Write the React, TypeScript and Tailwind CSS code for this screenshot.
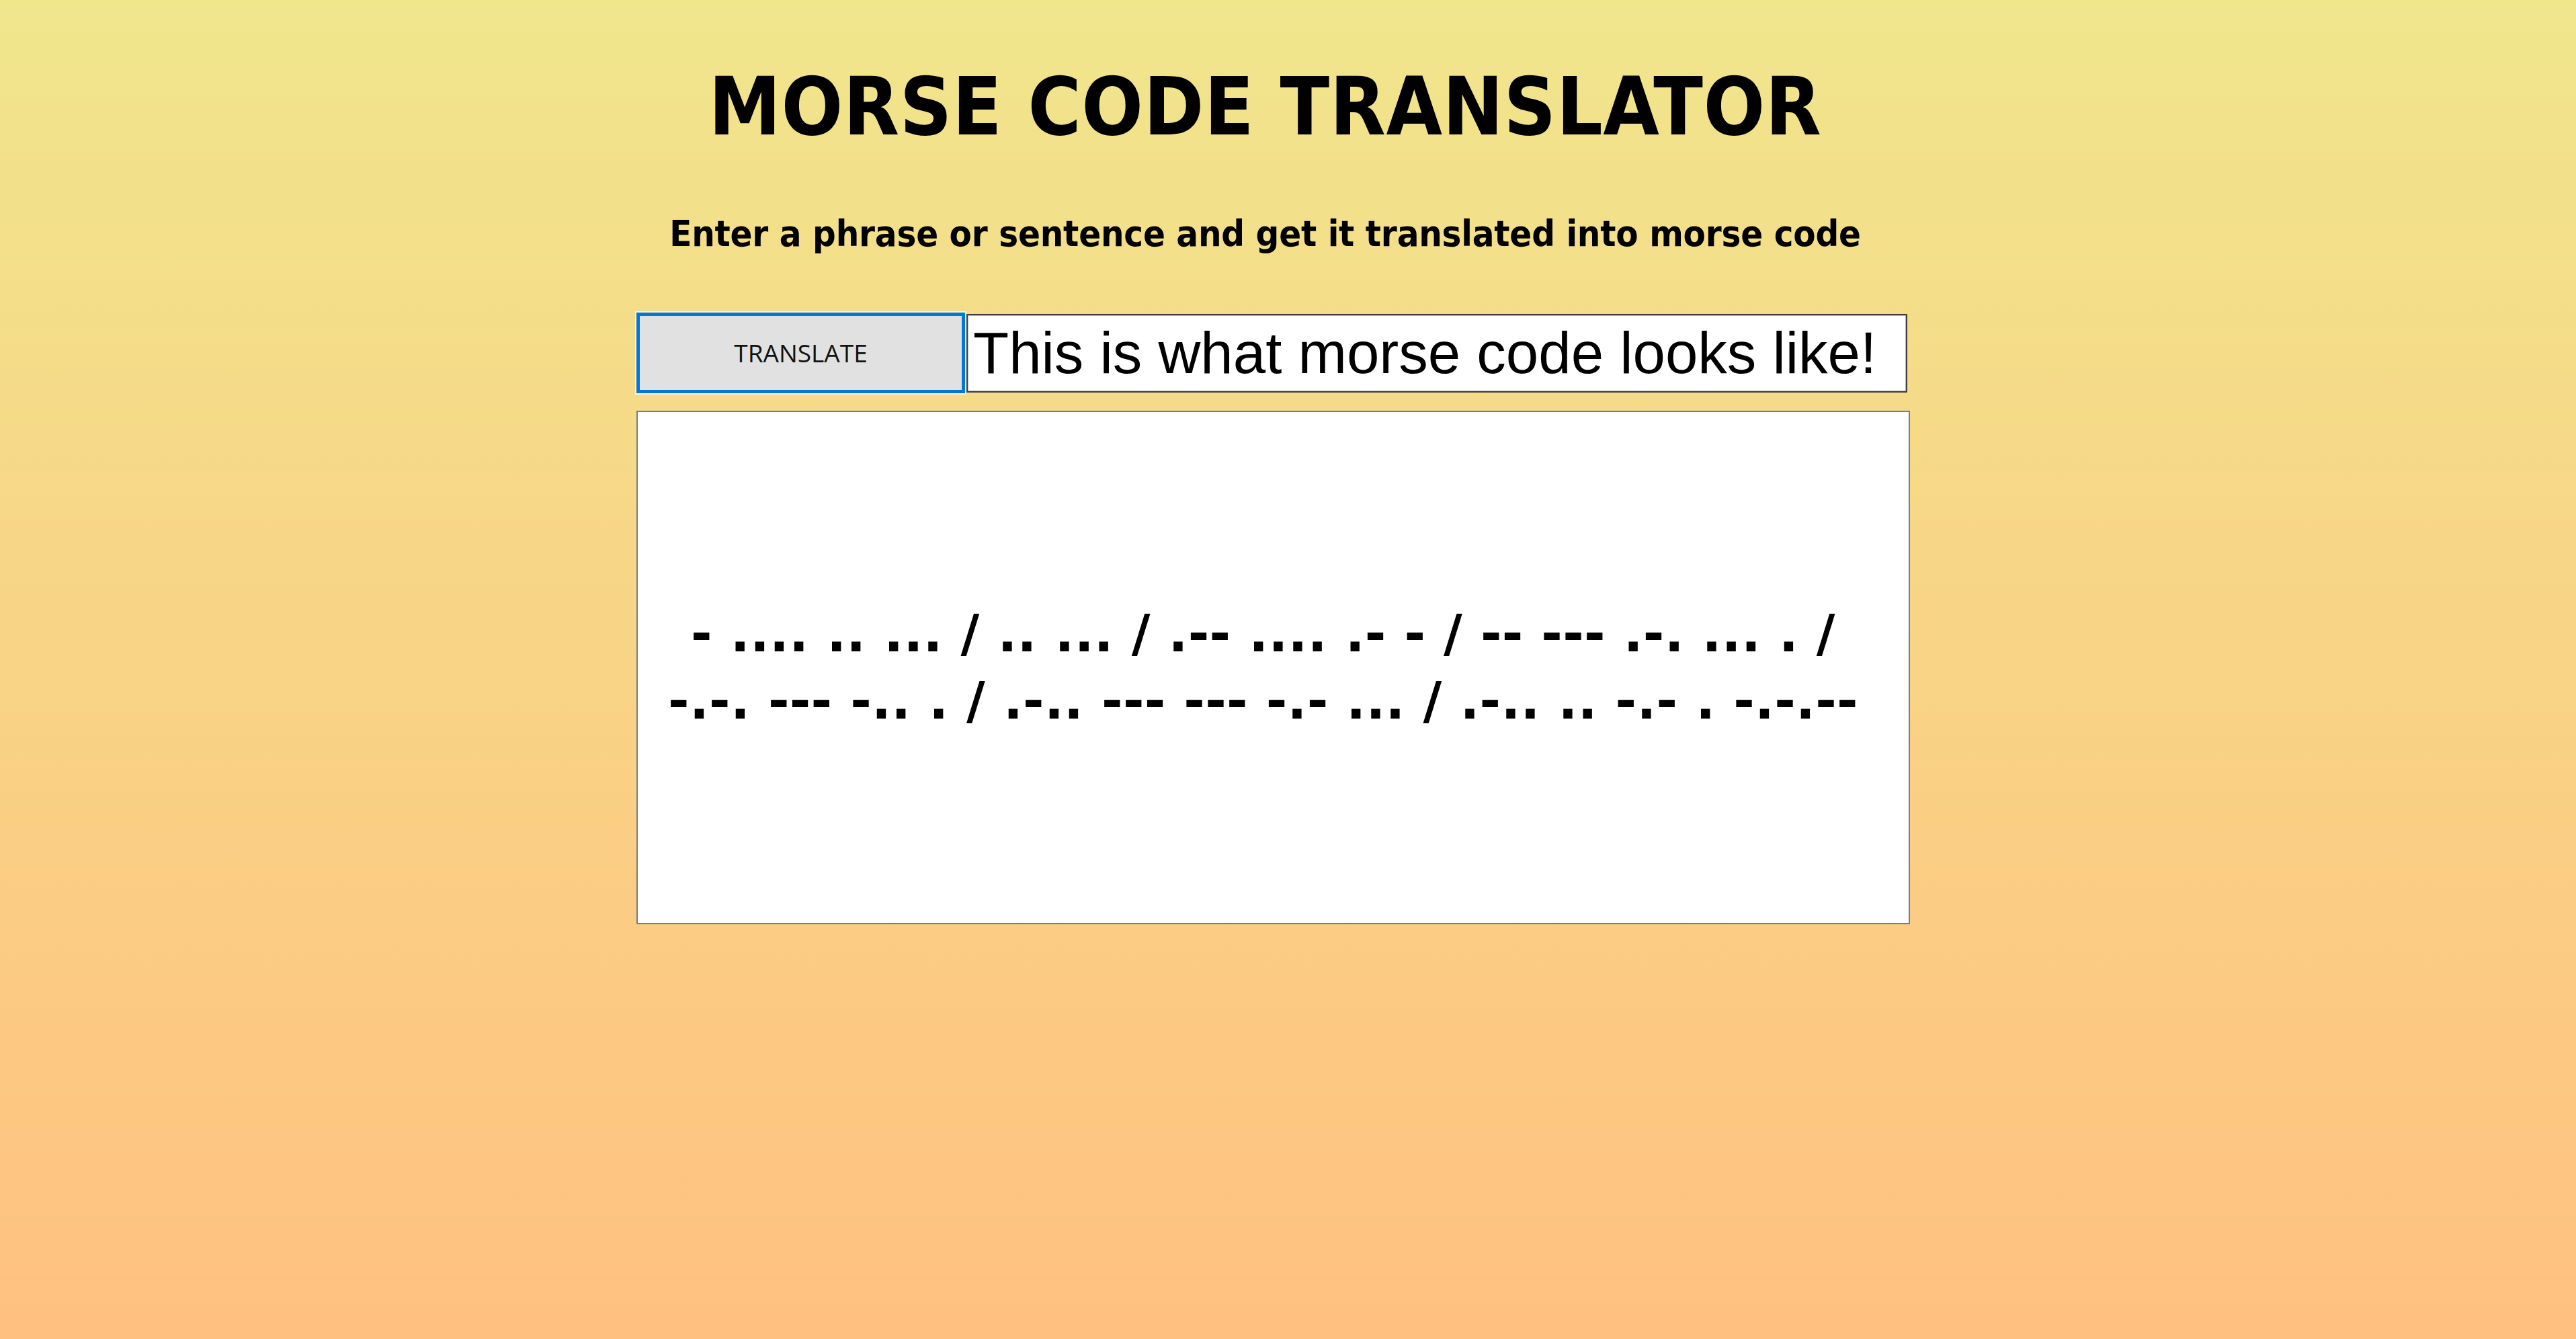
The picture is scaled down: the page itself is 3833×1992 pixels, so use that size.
import { useState } from 'react';

const MORSE: Record<string, string> = {
  a: '.-', b: '-...', c: '-.-.', d: '-..', e: '.', f: '..-.', g: '--.', h: '....', i: '..', j: '.---',
  k: '-.-', l: '.-..', m: '--', n: '-.', o: '---', p: '.--.', q: '--.-', r: '.-.', s: '...', t: '-',
  u: '..-', v: '...-', w: '.--', x: '-..-', y: '-.--', z: '--..', '!': '-.-.--', '?': '..--..',
  '.': '.-.-.-', ',': '--..--',
};

function toMorse(text: string) {
  return text
    .toLowerCase()
    .split(' ')
    .filter(Boolean)
    .map((word) => word.split('').map((ch) => MORSE[ch] ?? '').filter(Boolean).join(' '))
    .join(' / ');
}

export default function App() {
  const [phrase, setPhrase] = useState('This is what morse code looks like!');
  const [output, setOutput] = useState(toMorse('This is what morse code looks like!'));

  return (
    <div className="min-h-screen bg-gradient-to-b from-[#f0e68c] to-[#ffc080] text-black">
      <div className="ml-[947px] w-[1895px] pt-[89px] flex flex-col">
        <h1 className="pr-[24px] text-center font-['DejaVu_Sans_Condensed','DejaVu_Sans',sans-serif] font-bold text-[120px] tracking-[0.6px] leading-[140px]">
          MORSE CODE TRANSLATOR
        </h1>
        <p className="mt-[87px] pr-[24px] text-center font-['DejaVu_Sans_Condensed','DejaVu_Sans',sans-serif] font-bold text-[54px] tracking-[-0.2px] leading-[64px]">
          Enter a phrase or sentence and get it translated into morse code
        </p>

        <div className="mt-[85px] flex items-center gap-[2px]">
          <button
            onClick={() => setOutput(toMorse(phrase))}
            className="w-[489px] h-[120px] bg-[#e1e1e1] border-[5px] border-[#0078d7] outline outline-2 outline-[#f7f3dc] font-['Open_Sans',sans-serif] text-[37px] text-[#111]"
          >
            TRANSLATE
          </button>
          <input
            value={phrase}
            onChange={(e) => setPhrase(e.target.value)}
            className="w-[1400px] h-[117px] bg-white border-2 border-[#3f3f3f] shadow-[inset_0_0_0_1px_#b5b5b5] pl-[8px] font-['Liberation_Sans',Arial,sans-serif] text-[87px] text-black outline-none"
          />
        </div>

        <div className="mt-[26px] h-[764px] bg-white border-2 border-[#7c7c7c] flex items-center justify-center pl-[30px] pr-[60px]">
          <p className="text-center font-['DejaVu_Sans',sans-serif] font-bold text-[76px] tracking-[0.3px] leading-[100px]">
            {output.split(' ').map((token, i) => (
              <span key={i}>
                {i > 0 && ' '}
                <span className="whitespace-nowrap">{token}</span>
              </span>
            ))}
          </p>
        </div>
      </div>
    </div>
  );
}
